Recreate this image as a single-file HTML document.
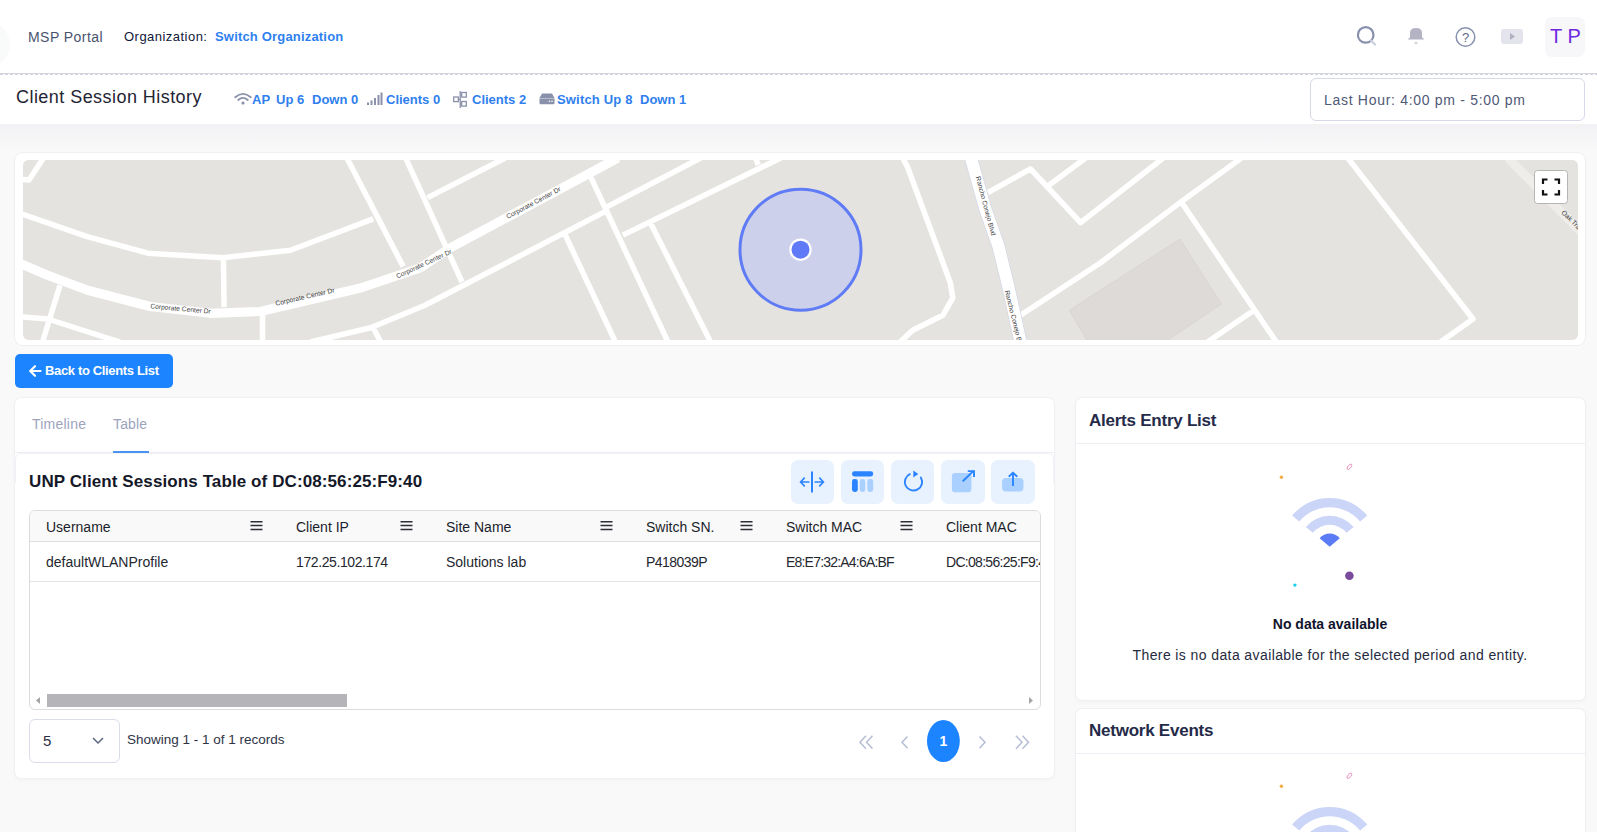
<!DOCTYPE html>
<html><head><meta charset="utf-8">
<style>
*{box-sizing:border-box;margin:0;padding:0}
html,body{width:1597px;height:832px;overflow:hidden;background:#f9f9fa;font-family:"Liberation Sans",sans-serif;color:#1f2337}
.abs{position:absolute}
#hdr{position:absolute;left:0;top:0;width:1597px;height:74px;background:#fff;border-bottom:1px solid #d6d6da}
#dash{position:absolute;left:0;top:74px;width:1597px;height:1px;background:repeating-linear-gradient(90deg,#cdd3e4 0 3px,#fff 3px 5px)}
#sub{position:absolute;left:0;top:75px;width:1597px;height:49px;background:#fff}
.t{position:absolute;white-space:pre;line-height:1}
.card{position:absolute;background:#fff;border-radius:6px}
</style></head><body>
<div id="hdr">
  <div class="abs" style="left:-35px;top:22px;width:45px;height:45px;border-radius:50%;background:#f9fafa"></div>
  <div class="t" style="left:28px;top:30px;font-size:14px;color:#4a5270;letter-spacing:0.45px">MSP Portal</div>
  <div class="t" style="left:124px;top:30px;font-size:13px;color:#10173a;letter-spacing:0.47px">Organization:</div>
  <div class="t" style="left:215px;top:30px;font-size:13px;font-weight:700;color:#2f7ff0;letter-spacing:0.18px">Switch Organization</div>
  <!-- icons -->
  <svg class="abs" style="left:1350px;top:20px" width="240" height="40" viewBox="1350 20 240 40">
    <circle cx="1365.7" cy="34.9" r="7.8" fill="none" stroke="#8790ad" stroke-width="2.2"/>
    <line x1="1371" y1="40.5" x2="1375" y2="44.5" stroke="#c9cde0" stroke-width="2.2" stroke-linecap="round"/>
    <path d="M1408 39.5 Q1408 38.5 1410 37.5 L1410 33 Q1410 28 1416 28 Q1422 28 1422 33 L1422 37.5 Q1424 38.5 1424 39.5 Z" fill="#b3b3c4"/>
    <circle cx="1416" cy="43" r="1.5" fill="#d6d6e0"/>
    <circle cx="1465.5" cy="37" r="9.3" fill="none" stroke="#8791b0" stroke-width="1.5"/>
    <text x="1465.5" y="41.8" font-family="Liberation Sans" font-size="13" text-anchor="middle" fill="#5f6b8c">?</text>
    <rect x="1501" y="29" width="22" height="15" rx="3" fill="#e4e4ec"/>
    <path d="M1510 33 L1515 36.5 L1510 40 Z" fill="#b0b0c2"/>
  </svg>
  <div class="abs" style="left:1545px;top:17px;width:40px;height:40px;background:#f7f7fa;border-radius:7px"></div>
  <div class="t" style="left:1550px;top:26px;font-size:20px;color:#6d28e0">T P</div>
</div>
<div id="dash"></div>
<div id="sub">
  <div class="t" style="left:16px;top:13px;font-size:18px;color:#1f2433;letter-spacing:0.45px">Client Session History</div>
  <div class="t" style="left:1324px;top:18px;font-size:14px;color:#4f5977;letter-spacing:0.7px">Last Hour: 4:00 pm - 5:00 pm</div>
  
  <svg class="abs" style="left:234px;top:17px" width="18" height="14" viewBox="0 0 18 14">
    <path d="M1.2 5.2 Q9 -1.5 16.8 5.2" fill="none" stroke="#8a92ab" stroke-width="1.8" stroke-linecap="round"/>
    <path d="M4.2 8 Q9 3.8 13.8 8" fill="none" stroke="#8a92ab" stroke-width="1.8" stroke-linecap="round"/>
    <circle cx="9" cy="11" r="1.6" fill="#8a92ab"/>
  </svg>
  <div class="t" style="left:252px;top:18px;font-size:13px;font-weight:700;color:#2f80ee">AP</div>
  <div class="t" style="left:276px;top:18px;font-size:13px;font-weight:700;color:#2f80ee">Up 6</div>
  <div class="t" style="left:312px;top:18px;font-size:13px;font-weight:700;color:#2f80ee">Down 0</div>
  <svg class="abs" style="left:366px;top:17px" width="17" height="14" viewBox="0 0 17 14">
    <rect x="1" y="10.5" width="2" height="2.5" fill="#8a92ab"/>
    <rect x="4.5" y="8.5" width="2" height="4.5" fill="#8a92ab"/>
    <rect x="8" y="6" width="2" height="7" fill="#8a92ab"/>
    <rect x="11.5" y="3" width="2" height="10" fill="#8a92ab"/>
    <rect x="14.5" y="0.5" width="2" height="12.5" fill="#8a92ab"/>
  </svg>
  <div class="t" style="left:386px;top:18px;font-size:13px;font-weight:700;color:#2f80ee">Clients 0</div>
  <svg class="abs" style="left:453px;top:16px" width="15" height="17" viewBox="0 0 15 17">
    <rect x="0.7" y="6" width="4.6" height="4.6" fill="none" stroke="#8a92ab" stroke-width="1.3"/>
    <rect x="8.7" y="1.5" width="4.6" height="4.6" fill="none" stroke="#8a92ab" stroke-width="1.3"/>
    <rect x="8.7" y="10.5" width="4.6" height="4.6" fill="none" stroke="#8a92ab" stroke-width="1.3"/>
    <path d="M5.3 8.3 H7.2 M7.2 0 V17 M7.2 3.8 H8.7 M7.2 12.8 H8.7" stroke="#8a92ab" stroke-width="1.3" fill="none"/>
  </svg>
  <div class="t" style="left:472px;top:18px;font-size:13px;font-weight:700;color:#2f80ee">Clients 2</div>
  <svg class="abs" style="left:539px;top:18px" width="16" height="12" viewBox="0 0 16 12">
    <path d="M3 0.5 H13 L15.5 5 V10 Q15.5 11.2 14.3 11.2 H1.7 Q0.5 11.2 0.5 10 V5 Z" fill="#8a92ab"/>
    <rect x="0.5" y="5" width="15" height="0.8" fill="#fff" opacity="0.5"/>
    <circle cx="10.5" cy="8.2" r="0.8" fill="#fff"/><circle cx="13" cy="8.2" r="0.8" fill="#fff"/>
  </svg>
  <div class="t" style="left:557px;top:18px;font-size:13px;font-weight:700;color:#2f80ee;letter-spacing:0.17px">Switch Up 8</div>
  <div class="t" style="left:640px;top:18px;font-size:13px;font-weight:700;color:#2f80ee">Down 1</div>
  <div class="abs" style="left:1310px;top:3px;width:275px;height:43px;border:1px solid #d5d9e8;border-radius:6px"></div>
</div>

<div id="sh" class="abs" style="left:0;top:124px;width:1597px;height:28px;background:linear-gradient(#f2f2f4,#f9f9fa)"></div>
<div class="card" style="left:15px;top:153px;width:1570px;height:192px;border-radius:8px;box-shadow:0 0 0 1px #efeff3"></div>
<div id="map" class="abs" style="left:23px;top:160px;width:1555px;height:180px;background:#e5e3df;border-radius:6px;overflow:hidden"><svg width="1555" height="180" viewBox="23 160 1555 180" style="position:absolute;left:0;top:0">
<rect x="23" y="160" width="1555" height="180" fill="#e5e3df"/>
<path d="M1508.0 158.0 L1584.0 235.0" stroke="#eeedea" stroke-width="9" fill="none"/>
<polygon points="1069.3,310.3 1180,239 1221.3,304 1165,342 1088,342" fill="#dddad7" stroke="#d3d0cc" stroke-width="0.6"/>
<path d="M43.5 158.0 L29 180.0 L18.0 179.0 M18.0 212.6 L86.4 236.4 L147.7 253.2 L222.9 257.7 L290.5 250.2 L373.2 218.9 M346.9 158.0 L403.2 266.5 M405.7 158.0 L462.0 282.0 M223.4 257.7 L224.1 307.0 M60.0 285.2 L42.5 342.0 M18.0 316.6 L47.6 319.0 L120.0 342.0 M262.5 311.5 L262.5 342.0 M310.5 342.0 L370.7 327.8 L425.0 305.3 L605.4 211.4 M373.2 327.8 L380.7 342.0 M427.6 197.6 L505.2 158.0 M590.4 176.3 L668.0 342.0 M605.4 207.6 L700.6 158.0 M622.9 235.1 L780.7 158.0 M565.3 235.1 L615.4 342.0 M650.5 223 L710.6 342.0 M755.7 158.0 L758.2 165.0 M902.7 158.0 L907.7 167.5 L950.3 282.7 L952.8 297.8 L942.8 315.3 L912.7 330.3 L900.0 342.0 M987.9 192.6 L1030.5 168.8 L1080.6 222.6 L1163.2 158.0 M1049.3 185.0 L1085.6 158.0 M1020.5 315.3 L1100.6 262.7 L1180.0 202.6 L1241.4 158.0 M1182.5 203.8 L1276.4 342.0 M1347.8 158.0 L1473.0 319.0 L1440.5 342.0 M1207.6 342.0 L1253.9 310.3" stroke="#fff" stroke-width="5.5" fill="none" stroke-linejoin="round"/>
<path d="M18.0 262.7 L47.6 275.2 L87.6 290.3 L150.2 306.5 L210.4 313.3 L260.4 311.5 L360.6 288.0 L420.0 268.0 L450.1 248 L618.0 158.0" stroke="#fff" stroke-width="9.2" fill="none" stroke-linejoin="round"/>
<path d="M971 158 L985 208 L998.4 246 L1008 285 L1020.5 342" stroke="#d5d8e6" stroke-width="13.5" fill="none"/>
<path d="M971 158 L985 208 L998.4 246 L1008 285 L1020.5 342" stroke="#fff" stroke-width="12" fill="none"/>
<g font-family="Liberation Sans" font-size="6.7" fill="#3d3d3d">
<text x="180.5" y="311" text-anchor="middle" transform="rotate(5 180.5 309)">Corporate Center Dr</text>
<text x="305" y="299" text-anchor="middle" transform="rotate(-13 305 297)">Corporate Center Dr</text>
<text x="424" y="266" text-anchor="middle" transform="rotate(-25 424 264)">Corporate Center Dr</text>
<text x="533.5" y="205" text-anchor="middle" transform="rotate(-28 533.5 203)">Corporate Center Dr</text>
<text x="985.5" y="208" text-anchor="middle" transform="rotate(75 985.5 206)">Rancho Conejo Blvd</text>
<text x="1014" y="322" text-anchor="middle" transform="rotate(76 1014 320)">Rancho Conejo Blvd</text>
<text x="1572" y="223" text-anchor="middle" transform="rotate(45 1572 221)">Oak Trail</text>
</g>
<circle cx="800.5" cy="249.7" r="60.5" fill="#cdd0ea" stroke="#5f7cf6" stroke-width="3"/>
<circle cx="800.5" cy="249.7" r="11.2" fill="#fff"/>
<circle cx="800.5" cy="249.7" r="9" fill="#6079f7"/>
<rect x="1534.5" y="170.5" width="33" height="33" rx="3" fill="#fff" stroke="#b5b5b5" stroke-width="1"/>
<path d="M1543 184V179.5H1547.5 M1554.5 179.5H1559V184 M1559 190V194.5H1554.5 M1547.5 194.5H1543V190" fill="none" stroke="#111" stroke-width="2.2"/>
</svg></div>
<div class="abs" style="left:15px;top:354px;width:158px;height:34px;background:#1c84ff;border-radius:5px"></div>
<svg class="abs" style="left:28px;top:364px" width="14" height="14" viewBox="0 0 14 14"><path d="M12.5 7 H2.5 M7 2.2 L2.2 7 L7 11.8" fill="none" stroke="#fff" stroke-width="2.2" stroke-linecap="round" stroke-linejoin="round"/></svg>
<div class="t" style="left:45px;top:364px;font-size:13px;font-weight:700;color:#fff;letter-spacing:-0.35px">Back to Clients List</div>
<!-- left panel -->
<div class="card" style="left:15px;top:398px;width:1039px;height:380px;box-shadow:0 0 0 1px #f0f1f4,0 2px 5px rgba(0,0,0,0.035)"></div>
<div class="abs" style="left:15px;top:452px;width:1039px;height:1px;background:#eceef3"></div>
<div class="abs" style="left:15px;top:453px;width:1039px;height:30px;border:1px solid #f1f2f5;border-bottom:none;border-radius:6px 6px 0 0"></div>
<div class="t" style="left:32px;top:417px;font-size:14px;color:#9da3bd;letter-spacing:0.22px">Timeline</div>
<div class="t" style="left:113px;top:417px;font-size:14px;color:#9da3bd;letter-spacing:0.15px">Table</div>
<div class="abs" style="left:113px;top:451px;width:36px;height:2px;background:#4b93f0"></div>
<div class="t" style="left:29px;top:473px;font-size:17px;font-weight:700;color:#141828;letter-spacing:0.1px">UNP Client Sessions Table of DC:08:56:25:F9:40</div>
<!-- right panel -->
<div class="card" style="left:1076px;top:398px;width:509px;height:302px;box-shadow:0 0 0 1px #eff0f4,0 2px 5px rgba(0,0,0,0.035)"></div>
<div class="abs" style="left:1076px;top:443px;width:509px;height:1px;background:#eceef3"></div>
<div class="t" style="left:1089px;top:412px;font-size:17px;font-weight:700;color:#252a48;letter-spacing:-0.24px">Alerts Entry List</div>
<div class="card" style="left:1076px;top:709px;width:509px;height:140px;box-shadow:0 0 0 1px #eff0f4,0 2px 5px rgba(0,0,0,0.035)"></div>
<div class="abs" style="left:1076px;top:753px;width:509px;height:1px;background:#eceef3"></div>
<div class="t" style="left:1089px;top:722px;font-size:17px;font-weight:700;color:#252a48;letter-spacing:-0.24px">Network Events</div>

<!-- toolbar -->
<div class="abs" style="left:791px;top:460px;width:43px;height:44px;background:#e8f2fe;border-radius:7px"></div>
<div class="abs" style="left:841px;top:460px;width:43px;height:44px;background:#e8f2fe;border-radius:7px"></div>
<div class="abs" style="left:891px;top:460px;width:43px;height:44px;background:#e8f2fe;border-radius:7px"></div>
<div class="abs" style="left:941px;top:460px;width:44px;height:44px;background:#e8f2fe;border-radius:7px"></div>
<div class="abs" style="left:991px;top:460px;width:44px;height:44px;background:#e8f2fe;border-radius:7px"></div>
<svg class="abs" style="left:791px;top:460px" width="244" height="44" viewBox="791 460 244 44">
  <path d="M812 471.5V492.5" stroke="#2a84ff" stroke-width="2"/>
  <path d="M808.8 482H800.5M804.3 478.2L800.5 482L804.3 485.8" fill="none" stroke="#2a84ff" stroke-width="1.7" stroke-linecap="round" stroke-linejoin="round"/>
  <path d="M815.2 482H823.5M819.7 478.2L823.5 482L819.7 485.8" fill="none" stroke="#2a84ff" stroke-width="1.7" stroke-linecap="round" stroke-linejoin="round"/>
  <rect x="852" y="471.3" width="21.2" height="5.2" rx="2.4" fill="#2a84ff"/>
  <rect x="852" y="479" width="5.8" height="13" rx="2.4" fill="#2a84ff"/>
  <rect x="859.8" y="479" width="5.4" height="13" rx="2.4" fill="#a9d0ff"/>
  <rect x="867.3" y="479" width="5.9" height="13" rx="2.4" fill="#a9d0ff"/>
  <path d="M918.2 474.6 A8.6 8.6 0 1 1 906.8 476.2" fill="none" stroke="#2a84ff" stroke-width="1.9" stroke-linecap="round" transform="rotate(25 913 482)"/>
  <path d="M913.3 470.4 L918.3 473.9 L913.3 477.4 Z" fill="#2a84ff"/>
  <rect x="951.9" y="473" width="19.5" height="19.2" rx="3.2" fill="#a9d0ff"/>
  <path d="M963.3 480.8L973 471.4" stroke="#2a84ff" stroke-width="1.9" stroke-linecap="round"/>
  <path d="M967.8 471.1H974V477" fill="none" stroke="#2a84ff" stroke-width="1.9"/>
  <rect x="1002" y="478" width="21.5" height="13.5" rx="4" fill="#a9d0ff"/>
  <path d="M1013 473V486" stroke="#2a84ff" stroke-width="1.9"/>
  <path d="M1009.3 476.2L1013 472.6L1016.7 476.2" fill="none" stroke="#2a84ff" stroke-width="1.9" stroke-linecap="round" stroke-linejoin="round"/>
</svg>
<!-- table -->
<div class="abs" style="left:29px;top:510px;width:1012px;height:200px;border:1px solid #dcdcdc;border-radius:6px;overflow:hidden">
  <div class="abs" style="left:0;top:0;width:1010px;height:31px;background:#f9f9f9;border-bottom:1px solid #dedede"></div>
  <div class="abs" style="left:0;top:70px;width:1010px;height:1px;background:#e3e3e3"></div>
  <div class="abs" style="left:17px;top:183px;width:300px;height:13px;background:#b4b4b9"></div>
  <svg class="abs" style="left:4px;top:185px" width="8" height="9"><path d="M6 1L2 4.5L6 8Z" fill="#a5a5a5"/></svg>
  <svg class="abs" style="left:997px;top:185px" width="8" height="9"><path d="M2 1L6 4.5L2 8Z" fill="#a5a5a5"/></svg>
</div>
<div class="t" style="left:46px;top:520px;font-size:14px;color:#1b1d2a">Username</div>
<div class="t" style="left:296px;top:520px;font-size:14px;color:#1b1d2a">Client IP</div>
<div class="t" style="left:446px;top:520px;font-size:14px;color:#1b1d2a">Site Name</div>
<div class="t" style="left:646px;top:520px;font-size:14px;color:#1b1d2a">Switch SN.</div>
<div class="t" style="left:786px;top:520px;font-size:14px;color:#1b1d2a">Switch MAC</div>
<div class="t" style="left:946px;top:520px;font-size:14px;color:#1b1d2a">Client MAC</div>
<svg class="abs" style="left:250px;top:520px" width="13" height="11" viewBox="0 0 13 11"><path d="M0.5 1.7H12.5M0.5 5.6H12.5M0.5 9.6H12.5" stroke="#2c2f38" stroke-width="1.5"/></svg>
<svg class="abs" style="left:400px;top:520px" width="13" height="11" viewBox="0 0 13 11"><path d="M0.5 1.7H12.5M0.5 5.6H12.5M0.5 9.6H12.5" stroke="#2c2f38" stroke-width="1.5"/></svg>
<svg class="abs" style="left:600px;top:520px" width="13" height="11" viewBox="0 0 13 11"><path d="M0.5 1.7H12.5M0.5 5.6H12.5M0.5 9.6H12.5" stroke="#2c2f38" stroke-width="1.5"/></svg>
<svg class="abs" style="left:740px;top:520px" width="13" height="11" viewBox="0 0 13 11"><path d="M0.5 1.7H12.5M0.5 5.6H12.5M0.5 9.6H12.5" stroke="#2c2f38" stroke-width="1.5"/></svg>
<svg class="abs" style="left:900px;top:520px" width="13" height="11" viewBox="0 0 13 11"><path d="M0.5 1.7H12.5M0.5 5.6H12.5M0.5 9.6H12.5" stroke="#2c2f38" stroke-width="1.5"/></svg>
<div class="t" style="left:46px;top:555px;font-size:14px;color:#25272f;">defaultWLANProfile</div>
<div class="t" style="left:296px;top:555px;font-size:14px;color:#25272f;letter-spacing:-0.4px">172.25.102.174</div>
<div class="t" style="left:446px;top:555px;font-size:14px;color:#25272f;">Solutions lab</div>
<div class="t" style="left:646px;top:555px;font-size:14px;color:#25272f;letter-spacing:-0.55px">P418039P</div>
<div class="t" style="left:786px;top:555px;font-size:14px;color:#25272f;letter-spacing:-0.8px">E8:E7:32:A4:6A:BF</div>
<div class="abs" style="left:940px;top:545px;width:100px;height:30px;overflow:hidden"><div class="t" style="left:6px;top:10px;font-size:14px;color:#25272f;letter-spacing:-0.7px">DC:08:56:25:F9:40</div></div>

<!-- pagination -->
<div class="abs" style="left:29px;top:719px;width:91px;height:44px;border:1px solid #d9dde9;border-radius:6px"></div>
<div class="t" style="left:43px;top:733px;font-size:15px;color:#2a2f45">5</div>
<svg class="abs" style="left:91px;top:736px" width="14" height="9" viewBox="0 0 14 9"><path d="M2 2L7 7L12 2" fill="none" stroke="#5c6580" stroke-width="1.5"/></svg>
<div class="t" style="left:127px;top:733px;font-size:13.5px;color:#2e3346;letter-spacing:0px">Showing 1 - 1 of 1 records</div>
<svg class="abs" style="left:850px;top:720px" width="190" height="42" viewBox="850 720 190 42">
  <path d="M866 735.8L860 742.3L866 748.8M872.5 735.8L866.5 742.3L872.5 748.8" fill="none" stroke="#b9c0d6" stroke-width="1.6"/>
  <path d="M907.5 736.5L902 742.3L907.5 748.2" fill="none" stroke="#b9c0d6" stroke-width="1.6"/>
  <ellipse cx="943.4" cy="741" rx="16.4" ry="21" fill="#1c84ff"/>
  <path d="M979.5 736.5L985 742.3L979.5 748.2" fill="none" stroke="#b9c0d6" stroke-width="1.6"/>
  <path d="M1016 735.8L1022 742.3L1016 748.8M1022.5 735.8L1028.5 742.3L1022.5 748.8" fill="none" stroke="#b9c0d6" stroke-width="1.6"/>
</svg>
<div class="t" style="left:936px;top:734px;font-size:14px;font-weight:700;color:#fff;width:15px;text-align:center">1</div>

<svg class="abs" style="left:1270px;top:455px" width="120" height="140" viewBox="1270 455 120 140">
  <path d="M1292.10 515.59 A48.8 48.8 0 0 1 1367.30 515.59 L1360.14 521.52 A39.5 39.5 0 0 0 1299.26 521.52 Z M1305.81 526.94 A31 31 0 0 1 1353.59 526.94 L1346.57 532.74 A21.9 21.9 0 0 0 1312.83 532.74 Z" fill="#cbd5f7"/>
  <path d="M1329.7 546.7 L1319.61 538.35 A13.1 13.1 0 0 1 1339.79 538.35 Z" fill="#5b7cf5"/>
  <ellipse cx="1349.4" cy="466.8" rx="3.2" ry="1.5" fill="none" stroke="#e68bb6" stroke-width="0.9" transform="rotate(-50 1349.4 466.8)"/>
  <circle cx="1281.4" cy="477.2" r="1.7" fill="#f4ae45"/>
  <circle cx="1294.9" cy="585.1" r="1.7" fill="#19cff0"/>
  <circle cx="1349.4" cy="575.7" r="4.3" fill="#7a4b9d"/>
</svg>
<div class="t" style="left:1130px;top:617px;width:400px;text-align:center;font-size:14px;font-weight:700;color:#10142c">No data available</div>
<div class="t" style="left:1130px;top:648px;width:400px;text-align:center;font-size:14px;color:#262a40;letter-spacing:0.4px">There is no data available for the selected period and entity.</div>

<svg class="abs" style="left:1270px;top:764px" width="120" height="140" viewBox="1270 455 120 140">
  <path d="M1292.10 515.59 A48.8 48.8 0 0 1 1367.30 515.59 L1360.14 521.52 A39.5 39.5 0 0 0 1299.26 521.52 Z M1305.81 526.94 A31 31 0 0 1 1353.59 526.94 L1346.57 532.74 A21.9 21.9 0 0 0 1312.83 532.74 Z" fill="#cbd5f7"/>
  <path d="M1329.7 546.7 L1319.61 538.35 A13.1 13.1 0 0 1 1339.79 538.35 Z" fill="#5b7cf5"/>
  <ellipse cx="1349.4" cy="466.8" rx="3.2" ry="1.5" fill="none" stroke="#e68bb6" stroke-width="0.9" transform="rotate(-50 1349.4 466.8)"/>
  <circle cx="1281.4" cy="477.2" r="1.7" fill="#f4ae45"/>
  <circle cx="1294.9" cy="585.1" r="1.7" fill="#19cff0"/>
  <circle cx="1349.4" cy="575.7" r="4.3" fill="#7a4b9d"/>
</svg></body></html>
